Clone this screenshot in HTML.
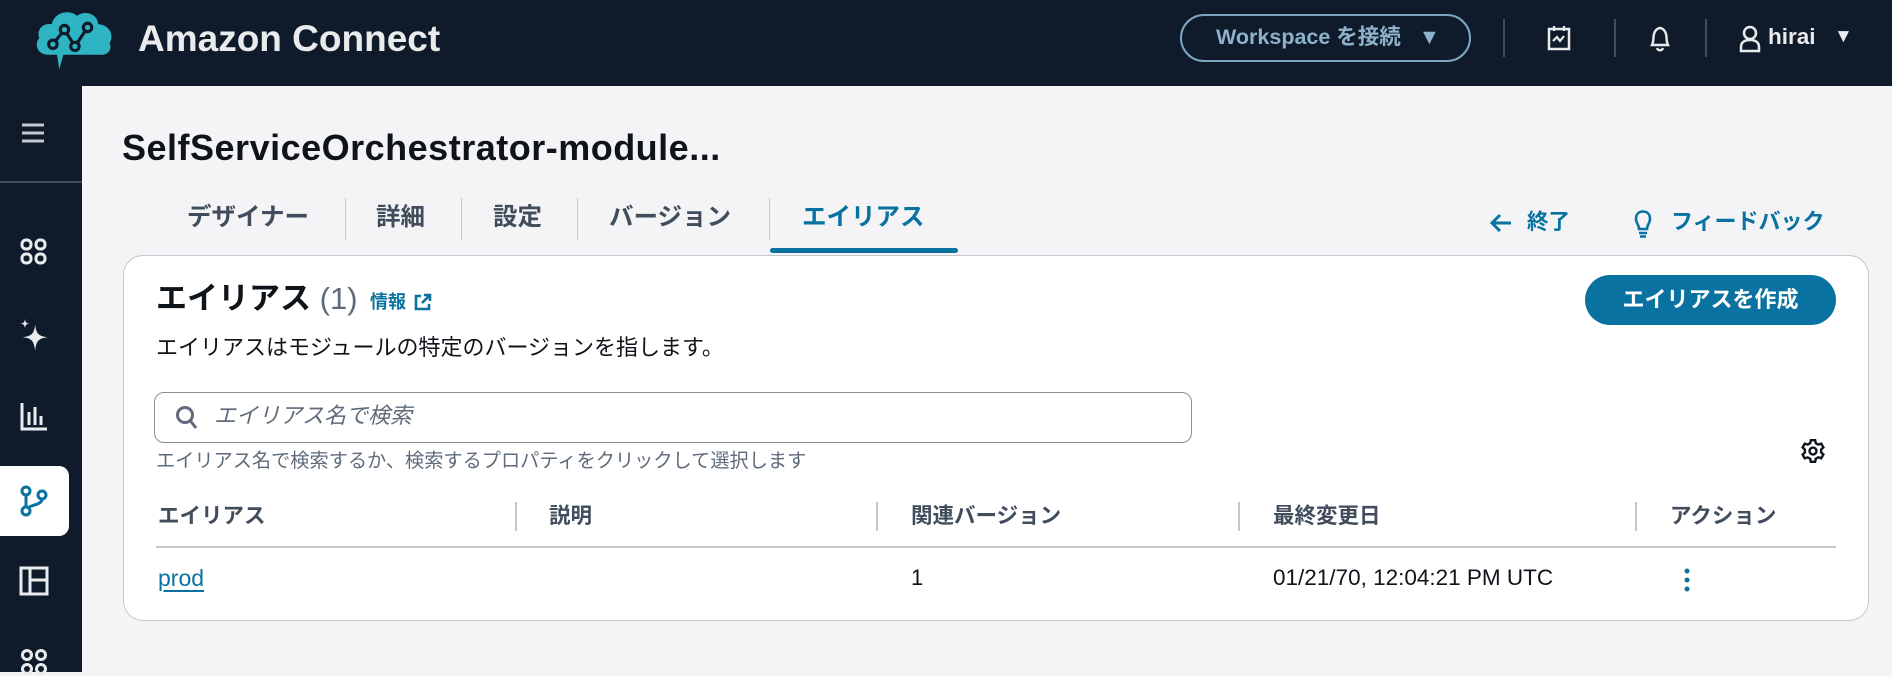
<!DOCTYPE html>
<html><head><meta charset="utf-8"><style>
*{margin:0;padding:0;box-sizing:border-box}
body{width:1892px;height:672px;overflow:hidden;background:#f4f4f6;font-family:"Liberation Sans","Noto Sans CJK JP",sans-serif;position:relative;color:#0f141a}
.a{position:absolute;white-space:nowrap}
.hdr{left:0;top:0;width:1892px;height:86px;background:#0f1b2a}
.side{left:0;top:86px;width:82px;height:586px;background:#0f1b2a}
.vsep{width:2px;background:#414d5c}
.tab{top:203px;font-size:24.5px;font-weight:bold;color:#414d5c;line-height:30px}
.tsep{top:198px;width:1px;height:42px;background:#c6c6cd}
.th{top:502px;font-size:21.5px;font-weight:bold;color:#414d5c;line-height:28px}
.thsep{top:502px;width:2px;height:29px;background:#c6c6cd}
.lnk{color:#0972a0;font-weight:bold}
</style></head><body>
<div class="a hdr"></div>
<svg class="a" style="left:34px;top:6px" width="84" height="66" viewBox="0 0 80 62">
<path d="M14 46 C3 46 0 36 5 30 C2 22 9 15 17 17 C19 6 33 2 41 9 C48 3 61 7 61 17 C71 17 77 27 72 35 C75 42 69 47 62 46 L28 46 L24 60 L22 46 Z" fill="#2fb4c4"/>
<path d="M18 36 L29 22 L39 38 L51 20" stroke="#0f1b2a" stroke-width="3" fill="none"/>
<circle cx="18" cy="36" r="4" fill="#2fb4c4" stroke="#0f1b2a" stroke-width="3"/><circle cx="29" cy="22" r="4" fill="#2fb4c4" stroke="#0f1b2a" stroke-width="3"/><circle cx="39" cy="38" r="4" fill="#2fb4c4" stroke="#0f1b2a" stroke-width="3"/><circle cx="51" cy="20" r="4" fill="#2fb4c4" stroke="#0f1b2a" stroke-width="3"/>
</svg>
<div class="a" style="left:138px;top:17px;font-size:37px;font-weight:bold;color:#e9ebed;line-height:44px">Amazon Connect</div>
<div class="a" style="left:1180px;top:14px;width:291px;height:48px;border:2.5px solid #7fa6c1;border-radius:24px;color:#8db2ca;font-size:21.5px;font-weight:bold;line-height:43px;padding-left:34px">Workspace を接続 &nbsp;&nbsp;▼</div>
<div class="a vsep" style="left:1503px;top:19px;height:38px"></div>
<div class="a vsep" style="left:1614px;top:19px;height:38px"></div>
<div class="a vsep" style="left:1705px;top:19px;height:38px"></div>
<svg class="a" style="left:1547px;top:25px" width="24" height="26" viewBox="0 0 24 26"><rect x="2" y="4" width="20" height="20" fill="none" stroke="#e9ebed" stroke-width="2.5"/><path d="M7 1v5M17 1v5M6 16l4-4 3 4 4-5" stroke="#e9ebed" stroke-width="2.2" fill="none"/></svg>
<svg class="a" style="left:1648px;top:25px" width="24" height="28" viewBox="0 0 24 28"><path d="M4 20 C6 16 5 12 6 9 C7 5 10 3 12 3 C14 3 17 5 18 9 C19 12 18 16 20 20 Z" fill="none" stroke="#e9ebed" stroke-width="2.4"/><path d="M9 23 C10 26 14 26 15 23" stroke="#e9ebed" stroke-width="2.4" fill="none"/></svg>
<svg class="a" style="left:1738px;top:25px" width="24" height="28" viewBox="0 0 24 28"><circle cx="12" cy="8" r="6" fill="none" stroke="#e9ebed" stroke-width="2.5"/><path d="M3 26 V22 C3 17 7 15 12 15 C17 15 21 17 21 22 V26 Z" fill="none" stroke="#e9ebed" stroke-width="2.5"/></svg>
<div class="a" style="left:1768px;top:23px;font-size:22.5px;font-weight:bold;color:#e9ebed;line-height:28px">hirai</div>
<div class="a" style="left:1834px;top:25px;font-size:19px;color:#e9ebed;line-height:24px">▼</div>

<div class="a side"></div>
<svg class="a" style="left:21px;top:122px" width="24" height="22"><path d="M1 3h22M1 11h22M1 19h22" stroke="#c6c6cd" stroke-width="3"/></svg>
<div class="a" style="left:0;top:181px;width:82px;height:2px;background:#414d5c"></div>
<svg class="a" style="left:20px;top:238px" width="28" height="28" viewBox="0 0 28 28" fill="none" stroke="#e9ebed" stroke-width="3"><rect x="2" y="2" width="9" height="9" rx="4"/><rect x="16" y="2" width="9" height="9" rx="4"/><rect x="2" y="16" width="9" height="9" rx="4"/><rect x="16" y="16" width="9" height="9" rx="4"/></svg>
<svg class="a" style="left:18px;top:318px" width="32" height="34" viewBox="0 0 28 30"><path d="M15 6 C16 14 18 16 26 17 C18 18 16 20 15 29 C14 20 12 18 4 17 C12 16 14 14 15 6Z" fill="#e9ebed"/><path d="M6 1 C6.5 4 7 4.5 10 5 C7 5.5 6.5 6 6 9 C5.5 6 5 5.5 2 5 C5 4.5 5.5 4 6 1Z" fill="#e9ebed"/></svg>
<svg class="a" style="left:20px;top:402px" width="28" height="30" viewBox="0 0 28 30" fill="none" stroke="#e9ebed" stroke-width="3"><path d="M2 1V27H27M9 10V23M15 5V23M21 14V23"/></svg>
<div class="a" style="left:0;top:466px;width:69px;height:70px;background:#fff;border-radius:0 10px 10px 0"></div>
<svg class="a" style="left:20px;top:485px" width="28" height="32" viewBox="0 0 28 32" fill="none" stroke="#0972a0" stroke-width="3"><circle cx="6" cy="6" r="4"/><circle cx="22" cy="10" r="4"/><circle cx="6" cy="26" r="4"/><path d="M6 10V22M22 14C22 20 10 20 8 23"/></svg>
<svg class="a" style="left:19px;top:566px" width="30" height="30" viewBox="0 0 30 30" fill="none" stroke="#e9ebed" stroke-width="3"><rect x="2" y="2" width="26" height="26"/><path d="M11 2V28M11 14H28"/></svg>
<svg class="a" style="left:20px;top:648px" width="28" height="28" viewBox="0 0 28 28" fill="none" stroke="#e9ebed" stroke-width="3"><circle cx="7" cy="7" r="4.5"/><circle cx="21" cy="7" r="4.5"/><circle cx="7" cy="21" r="4.5"/><circle cx="21" cy="21" r="4.5"/></svg>

<div class="a" style="left:122px;top:126px;font-size:36px;font-weight:bold;color:#0f141a;line-height:44px;letter-spacing:0.5px">SelfServiceOrchestrator-module...</div>

<div class="a tab" style="left:187px">デザイナー</div>
<div class="a tsep" style="left:345px"></div>
<div class="a tab" style="left:376px">詳細</div>
<div class="a tsep" style="left:461px"></div>
<div class="a tab" style="left:493px">設定</div>
<div class="a tsep" style="left:577px"></div>
<div class="a tab" style="left:609px">バージョン</div>
<div class="a tsep" style="left:769px"></div>
<div class="a tab" style="left:802px;color:#0972a0">エイリアス</div>
<div class="a" style="left:770px;top:248px;width:188px;height:5px;background:#0972a0;border-radius:3px"></div>

<svg class="a" style="left:1490px;top:213px" width="22" height="20" viewBox="0 0 22 20" fill="none" stroke="#0972a0" stroke-width="3"><path d="M21 10H3M10 2L2 10L10 18"/></svg>
<div class="a lnk" style="left:1527px;top:208px;font-size:21.5px;line-height:28px">終了</div>
<svg class="a" style="left:1634px;top:210px" width="18" height="28" viewBox="0 0 18 28" fill="none" stroke="#0972a0" stroke-width="2.6"><path d="M5 19C5 15 2 13 2 9C2 4 5 1.5 9 1.5C13 1.5 16 4 16 9C16 13 13 15 13 19ZM5 23H13M6 26.5H12"/></svg>
<div class="a lnk" style="left:1671px;top:208px;font-size:22px;line-height:28px">フィードバック</div>

<div class="a" style="left:123px;top:255px;width:1746px;height:366px;background:#fff;border:1.5px solid #c6c6cd;border-radius:20px"></div>
<div class="a" style="left:156px;top:280px;font-size:31px;font-weight:bold;line-height:38px">エイリアス <span style="font-weight:normal;color:#5f6b7a">(1)</span></div>
<div class="a lnk" style="left:370px;top:291px;font-size:18px;line-height:22px">情報</div>
<svg class="a" style="left:414px;top:293px" width="18" height="18" viewBox="0 0 18 18" fill="none" stroke="#0972a0" stroke-width="2.6"><path d="M7 3H2V16H15V11M10 2H16V8M16 2L8 10"/></svg>
<div class="a" style="left:156px;top:334px;font-size:22px;color:#0f141a;line-height:28px">エイリアスはモジュールの特定のバージョンを指します。</div>
<div class="a" style="left:1585px;top:275px;width:251px;height:50px;background:#0972a0;border-radius:25px;color:#fff;font-weight:bold;font-size:22px;line-height:50px;text-align:center">エイリアスを作成</div>

<div class="a" style="left:154px;top:392px;width:1038px;height:51px;border:1.5px solid #8c8c94;border-radius:10px"></div>
<svg class="a" style="left:175px;top:405px" width="24" height="26" viewBox="0 0 24 26" fill="none" stroke="#5f6b7a" stroke-width="3"><circle cx="10" cy="10" r="7.5"/><path d="M15.5 16L21 23"/></svg>
<div class="a" style="left:214px;top:402px;font-size:22px;font-style:italic;color:#5f6b7a;line-height:28px">エイリアス名で検索</div>
<div class="a" style="left:156px;top:450px;font-size:19.2px;color:#5f6b7a;line-height:24px">エイリアス名で検索するか、検索するプロパティをクリックして選択します</div>
<svg class="a" style="left:1800px;top:438px" width="26" height="26" viewBox="0 0 24 24" fill="none" stroke="#0f141a" stroke-width="2.2"><circle cx="12" cy="12" r="3.2"/><path d="M10 2h4l.6 2.8 2.3 1.3 2.7-.9 2 3.5-2.1 1.9v2.7l2.1 1.9-2 3.5-2.7-.9-2.3 1.3L14 22h-4l-.6-2.8-2.3-1.3-2.7.9-2-3.5 2.1-1.9v-2.7L2.4 8.7l2-3.5 2.7.9 2.3-1.3z"/></svg>

<div class="a th" style="left:158px">エイリアス</div>
<div class="a thsep" style="left:515px"></div>
<div class="a th" style="left:549px">説明</div>
<div class="a thsep" style="left:876px"></div>
<div class="a th" style="left:911px">関連バージョン</div>
<div class="a thsep" style="left:1238px"></div>
<div class="a th" style="left:1273px">最終変更日</div>
<div class="a thsep" style="left:1635px"></div>
<div class="a th" style="left:1670px">アクション</div>
<div class="a" style="left:156px;top:546px;width:1680px;height:1.5px;background:#c6c6cd"></div>

<div class="a" style="left:158px;top:564px;font-size:23px;color:#0972a0;line-height:28px;text-decoration:underline;text-underline-offset:4px;text-decoration-thickness:2px">prod</div>
<div class="a" style="left:911px;top:564px;font-size:22px;line-height:28px">1</div>
<div class="a" style="left:1273px;top:564px;font-size:22.5px;line-height:28px">01/21/70, 12:04:21 PM UTC</div>
<svg class="a" style="left:1683px;top:567px" width="8" height="26"><circle cx="4" cy="4" r="2.5" fill="#0972a0"/><circle cx="4" cy="13" r="2.5" fill="#0972a0"/><circle cx="4" cy="22" r="2.5" fill="#0972a0"/></svg>
</body></html>
